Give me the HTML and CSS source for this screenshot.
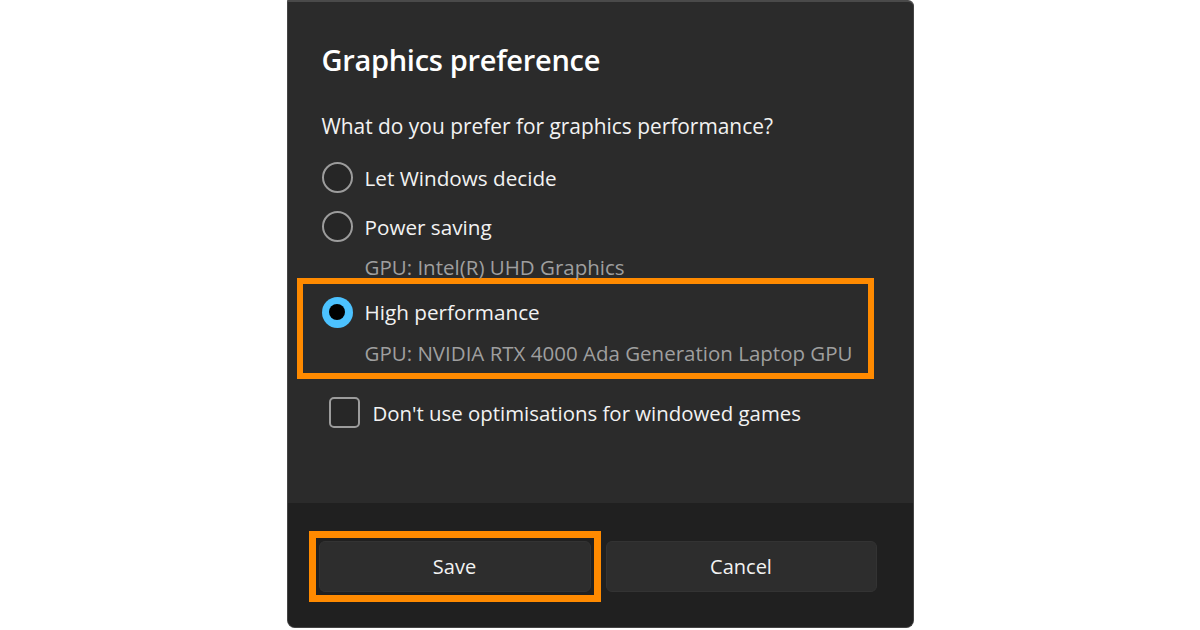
FILE: index.html
```html
<!DOCTYPE html>
<html lang="en">
<head>
<meta charset="utf-8">
<title>Graphics preference</title>
<link rel="stylesheet" href="styles.css">
</head>
<body>
<div class="dialog">
  <div class="content">
    <h1 class="title">Graphics preference</h1>
    <p class="question">What do you prefer for graphics performance?</p>
    <div class="option option-first">
      <span class="radio"></span>
      <span class="label">Let Windows decide</span>
    </div>
    <div class="option">
      <span class="radio"></span>
      <span class="label">Power saving</span>
    </div>
    <div class="gpu gpu-power">GPU: Intel(R) UHD Graphics</div>
    <div class="highlight">
      <div class="option option-sel">
        <span class="radio radio-on"><span class="dot"></span></span>
        <span class="label">High performance</span>
      </div>
      <div class="gpu gpu-sel">GPU: NVIDIA RTX 4000 Ada Generation Laptop GPU</div>
    </div>
    <div class="check-row">
      <span class="checkbox"></span>
      <span class="label label-check">Don't use optimisations for windowed games</span>
    </div>
  </div>
  <div class="footer">
    <div class="save-frame">
      <button class="btn">Save</button>
    </div>
    <button class="btn btn-cancel">Cancel</button>
  </div>
</div>
</body>
</html>
```
FILE: styles.css
```css
* { box-sizing: border-box; }
html, body { margin: 0; padding: 0; }
body {
  background: #ffffff;
  width: 1200px;
  height: 630px;
  overflow: hidden;
  font-family: "Open Sans", "Noto Sans", sans-serif;
}
.dialog {
  width: 627px;
  height: 628px;
  margin: 0 auto;
  background: #2b2b2b;
  border: 1px solid #444444;
  border-top: 2px solid #4a4a4a;
  border-radius: 0 6px 8px 8px;
  display: flex;
  flex-direction: column;
  overflow: hidden;
}
.content {
  flex: 1;
  padding: 38px 34px 0 34px;
  color: #ffffff;
}
.title {
  margin: 0;
  font-size: 29px;
  line-height: 40px;
  font-weight: 600;
  letter-spacing: -0.3px;
}
.question {
  margin: 32px 0 0 0;
  font-size: 20.9px;
  line-height: 28px;
  color: #f2f2f2;
}
.option {
  height: 49px;
  display: flex;
  align-items: center;
  gap: 12px;
}
.option-first { margin-top: 13px; }
.label {
  font-size: 20.7px;
  line-height: 28px;
  color: #f2f2f2;
}
.label-check { font-size: 20.4px; }
.radio {
  width: 31px;
  height: 31px;
  border-radius: 50%;
  border: 2px solid #9c9c9c;
  background: #262626;
  flex: none;
  display: flex;
  align-items: center;
  justify-content: center;
}
.radio-on {
  border: none;
  background: #4cc2ff;
}
.dot {
  width: 16px;
  height: 16px;
  border-radius: 50%;
  background: #000000;
}
.gpu {
  padding-left: 43px;
  font-size: 20.5px;
  line-height: 24px;
  color: #9f9f9f;
}
.gpu-power { margin-top: 4px; }
.highlight {
  margin: -1px 0 0 -25px;
  width: 577px;
  height: 101px;
  border: 6px solid #ff8a00;
  padding: 13px 0 0 19px;
}
.option-sel { height: 30px; }
.gpu-sel { margin-top: 14px; }
.check-row {
  margin: 18px 0 0 7px;
  display: flex;
  align-items: center;
  gap: 13px;
}
.checkbox {
  width: 31px;
  height: 31px;
  border: 2px solid #9c9c9c;
  border-radius: 5px;
  background: #272727;
  flex: none;
}
.footer {
  height: 124px;
  background: #202020;
  display: flex;
  align-items: center;
  padding: 2px 0 0 21px;
  gap: 5px;
}
.save-frame {
  border: 7px solid #ff8a00;
  padding: 3px;
  display: flex;
}
.btn {
  width: 272px;
  height: 51px;
  border: 1px solid #333333;
  border-radius: 6px;
  background: #2d2d2d;
  color: #f2f2f2;
  font-family: "Open Sans", "Noto Sans", sans-serif;
  font-size: 20px;
}
.btn-cancel { width: 271px; }
```
